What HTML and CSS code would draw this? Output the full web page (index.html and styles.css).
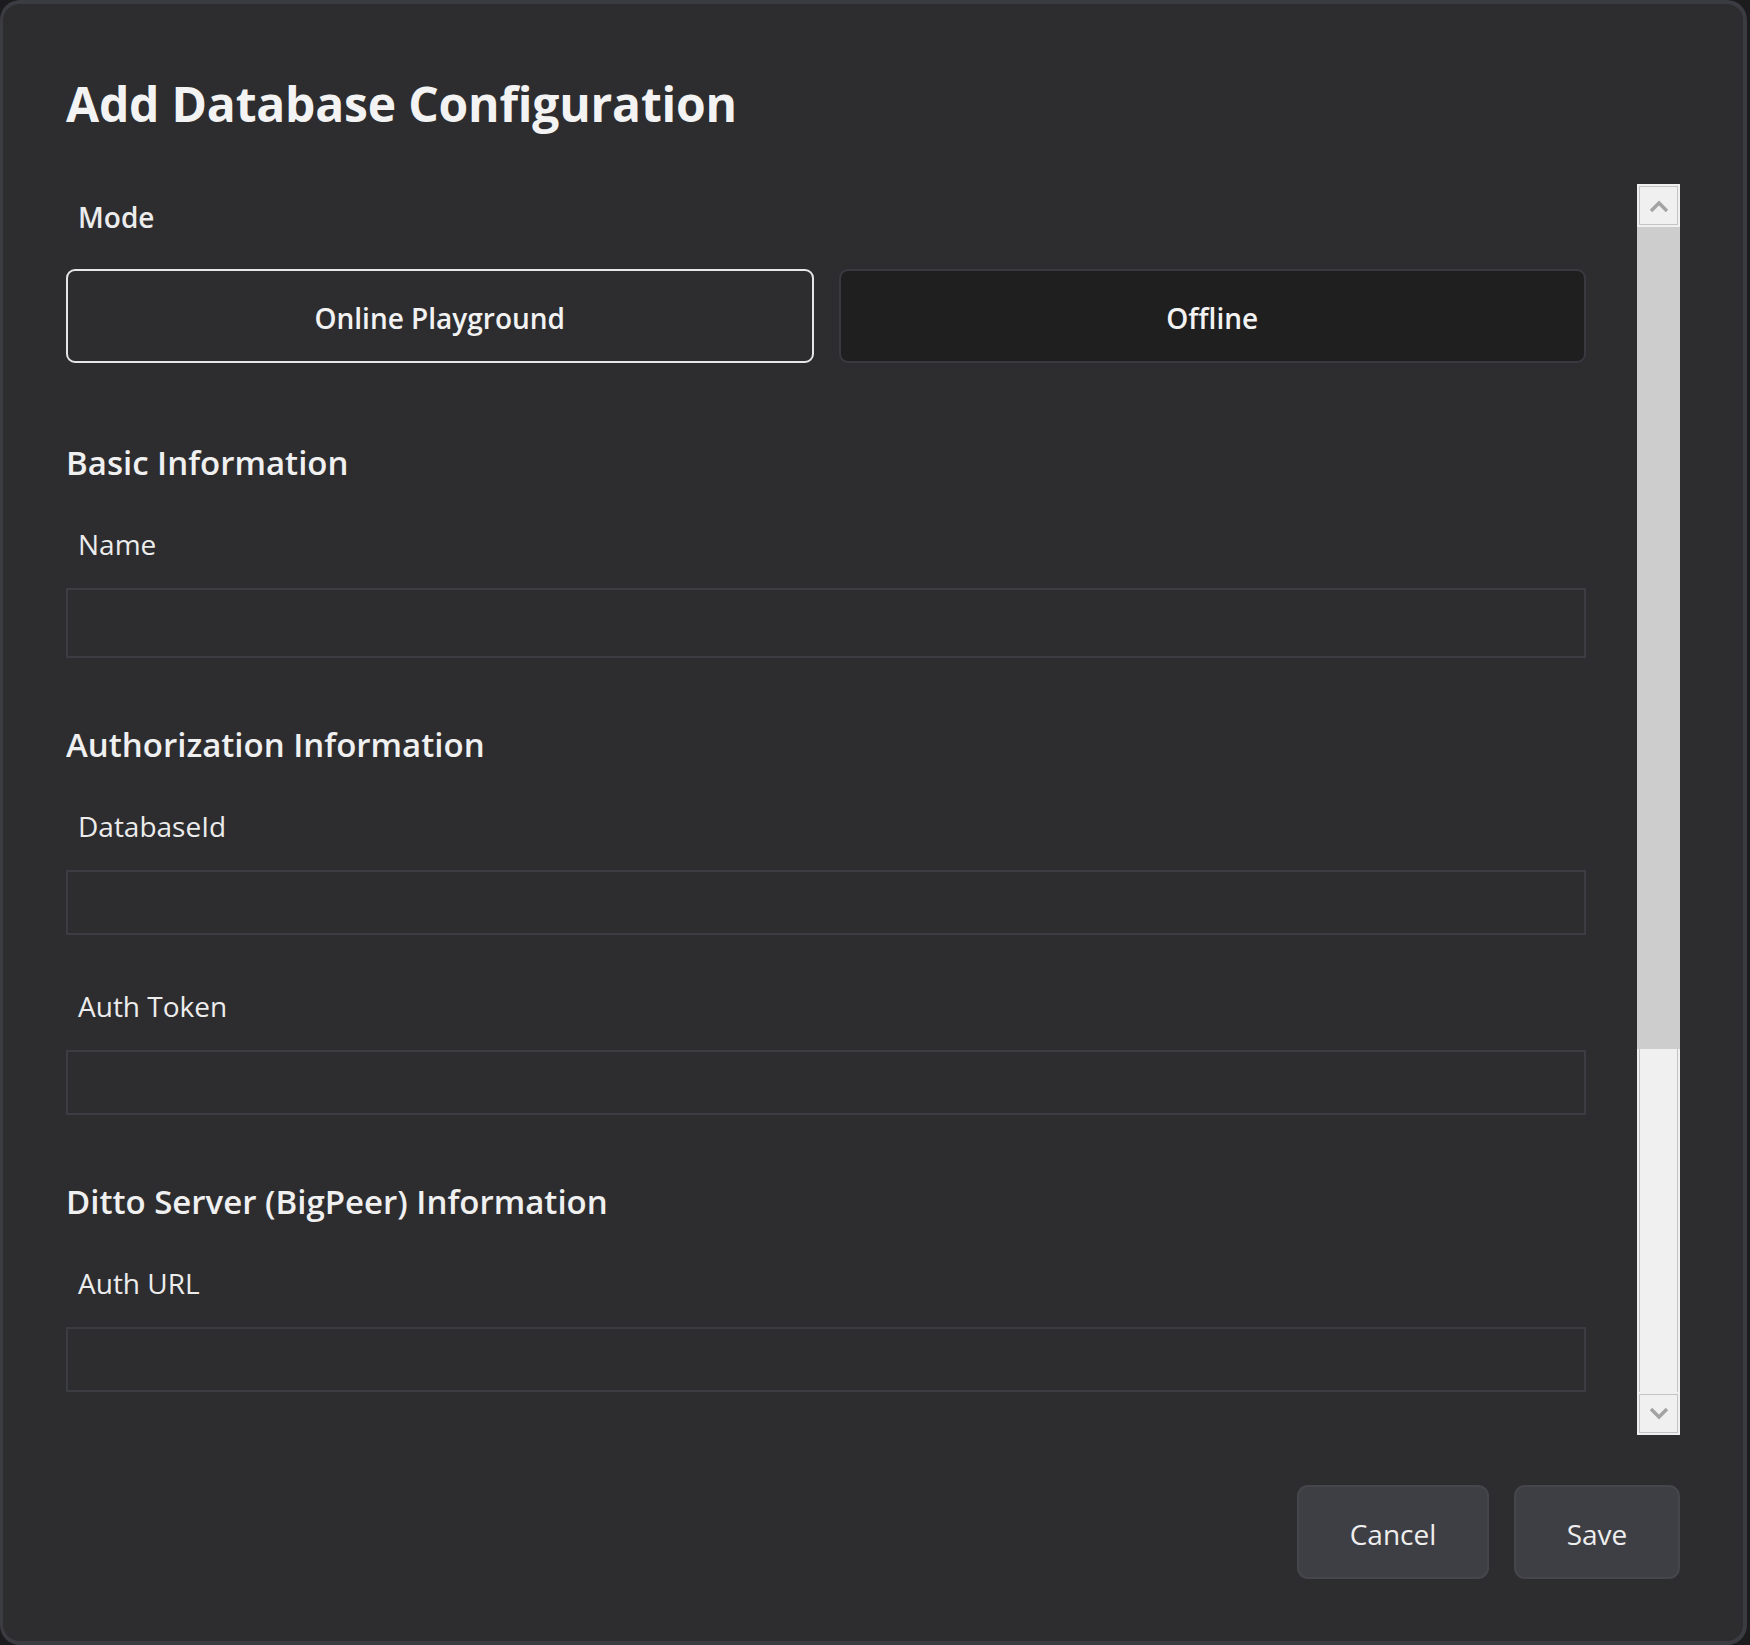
FILE: index.html
```html
<!DOCTYPE html>
<html lang="en">
<head>
<meta charset="utf-8">
<title>Add Database Configuration</title>
<link rel="stylesheet" href="styles.css">
</head>
<body>
<div class="window">
  <h1 class="title">Add Database Configuration</h1>
  <div class="body">
    <div class="content">
      <div class="label label-strong">Mode</div>
      <div class="modes">
        <button class="mode mode-active">Online Playground</button>
        <button class="mode mode-idle">Offline</button>
      </div>

      <h2 class="section first">Basic Information</h2>
      <div class="label">Name</div>
      <input class="field field-tall" type="text">

      <h2 class="section">Authorization Information</h2>
      <div class="label">DatabaseId</div>
      <input class="field" type="text">
      <div class="label next">Auth Token</div>
      <input class="field" type="text">

      <h2 class="section">Ditto Server (BigPeer) Information</h2>
      <div class="label">Auth URL</div>
      <input class="field" type="text">
    </div>
    <div class="scrollbar">
      <div class="sb-btn">
        <div class="sb-box">
          <svg width="20" height="14" viewBox="0 0 20 14"><path d="M2 12 L10 4 L18 12" fill="none" stroke="#a3a3a3" stroke-width="3.4"/></svg>
        </div>
      </div>
      <div class="sb-thumb"></div>
      <div class="sb-track"></div>
      <div class="sb-btn">
        <div class="sb-box">
          <svg width="20" height="14" viewBox="0 0 20 14"><path d="M2 2 L10 10 L18 2" fill="none" stroke="#a3a3a3" stroke-width="3.4"/></svg>
        </div>
      </div>
    </div>
  </div>
  <div class="footer">
    <button class="btn btn-cancel">Cancel</button>
    <button class="btn btn-save">Save</button>
  </div>
</div>
</body>
</html>
```

FILE: styles.css
```css
* { box-sizing: border-box; }

html, body {
  margin: 0;
  padding: 0;
  background: #1c1c1e;
  font-family: "Open Sans", "Noto Sans", sans-serif;
  color: #efefef;
}

.window {
  width: 1747px;
  height: 1645px;
  background: #2d2d30;
  border: 4px solid #3b3b42;
  border-left-width: 3px;
  border-radius: 20px;
  padding: 72px 63px 62px 63px;
  display: flex;
  flex-direction: column;
  overflow: hidden;
}

.title {
  margin: 0;
  font-size: 48px;
  line-height: 56px;
  font-weight: 700;
  color: #f3f3f3;
  letter-spacing: -0.2px;
}

.body {
  margin-top: 52px;
  height: 1251px;
  display: flex;
  flex-direction: row;
}

.content {
  flex: 1;
  overflow: hidden;
  padding: 15px 51px 0 0;
  display: flex;
  flex-direction: column;
}

.label {
  font-size: 28px;
  line-height: 36px;
  font-weight: 400;
  color: #ececec;
  padding-left: 12px;
  margin-bottom: 26px;
}

.label-strong {
  font-weight: 600;
  margin-bottom: 34px;
}

.label.next { margin-top: 53px; }

.modes {
  display: flex;
  gap: 25px;
}

.mode {
  flex: 1;
  height: 94px;
  padding: 4px 0 0 0;
  border-radius: 9px;
  font-family: inherit;
  font-size: 28px;
  font-weight: 600;
  color: #f2f2f2;
  cursor: pointer;
}

.mode-active {
  background: #2d2d30;
  border: 2px solid #e6e6e6;
}

.mode-idle {
  background: #1f1f20;
  border: 2px solid #393940;
}

.section {
  margin: 67px 0 43px 0;
  font-size: 33px;
  line-height: 40px;
  font-weight: 600;
  color: #f0f0f0;
}

.section.first { margin-top: 80px; }

.field {
  display: block;
  width: 100%;
  height: 65px;
  background: transparent;
  border: 2px solid #3c3c43;
  border-radius: 0;
  outline: none;
  color: #efefef;
  font-family: inherit;
  font-size: 28px;
  padding: 0 12px;
}

.field-tall { height: 70px; }

.scrollbar {
  width: 43px;
  display: flex;
  flex-direction: column;
  background: #f0f0f0;
}

.sb-btn {
  height: 43px;
  padding: 2px;
  flex: none;
}

.sb-box {
  height: 39px;
  border: 1px solid #c4c4c4;
  display: flex;
  align-items: center;
  justify-content: center;
}

.sb-thumb {
  height: 822px;
  flex: none;
  background: #cdcdcd;
}

.sb-track {
  flex: 1;
  margin: 0 2px;
  border-left: 1px solid #c4c4c4;
  border-right: 1px solid #c4c4c4;
}

.footer {
  margin-top: 50px;
  display: flex;
  justify-content: flex-end;
  gap: 25px;
}

.btn {
  height: 94px;
  padding: 4px 0 0 0;
  background: #3e3f45;
  border: 2px solid #45464c;
  border-radius: 11px;
  font-family: inherit;
  font-size: 28px;
  font-weight: 400;
  color: #eeeeee;
  cursor: pointer;
}

.btn-cancel { width: 192px; }
.btn-save { width: 166px; }
```
